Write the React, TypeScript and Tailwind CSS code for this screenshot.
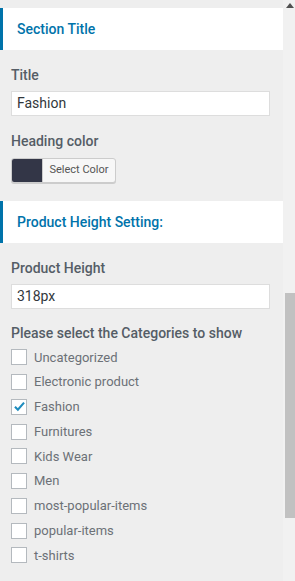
const categories = [
  { name: "Uncategorized", checked: false },
  { name: "Electronic product", checked: false },
  { name: "Fashion", checked: true },
  { name: "Furnitures", checked: false },
  { name: "Kids Wear", checked: false },
  { name: "Men", checked: false },
  { name: "most-popular-items", checked: false },
  { name: "popular-items", checked: false },
  { name: "t-shirts", checked: false },
];

function SectionHeader({ title }: { title: string }) {
  return (
    <div className="flex h-[42px] items-center border-l-[3px] border-[#0073aa] bg-white pl-[14px]">
      <h3 className="text-[14px] font-medium text-[#0073aa]">{title}</h3>
    </div>
  );
}

function Checkbox({ checked }: { checked: boolean }) {
  return (
    <span className="flex h-4 w-4 shrink-0 items-center justify-center border border-[#b4b9be] bg-white">
      {checked && (
        <svg width="13" height="13" viewBox="0 0 20 20" className="-mt-px">
          <path
            d="M3 10.5 L7.5 15 L17 4"
            fill="none"
            stroke="#1e8cbe"
            strokeWidth="3.2"
          />
        </svg>
      )}
    </span>
  );
}

export default function App() {
  return (
    <div
      className="flex h-[581px] w-[295px] overflow-hidden bg-[#eeeeee] text-[#555d66]"
      style={{ fontFamily: "Roboto, 'Liberation Sans', sans-serif" }}
    >
      <div className="w-[283px] shrink-0 pt-2">
        <SectionHeader title="Section Title" />

        <div className="px-[11px] pt-[16px]">
          <p className="text-[14px] font-medium leading-[18px]">Title</p>
          <div className="mt-[7px] flex h-[25px] w-[259px] items-center border border-[#dddddd] bg-white px-[5px] text-[14px] text-[#32373c]">
            Fashion
          </div>

          <p className="mt-[16px] text-[14px] font-medium leading-[18px]">
            Heading color
          </p>
          <div className="mt-[8px] flex h-[25px] w-[105px] overflow-hidden rounded-[3px] border border-[#cccccc] bg-[#f7f7f7] shadow-[0_1px_0_#cccccc]">
            <span className="w-[30px] bg-[#333647]" />
            <span className="flex flex-1 items-center justify-center border-l border-[#cccccc] text-[11px] text-[#555555]">
              Select Color
            </span>
          </div>
        </div>

        <div className="mt-[18px]">
          <SectionHeader title="Product Height Setting:" />
        </div>

        <div className="px-[11px] pt-[16px]">
          <p className="text-[14px] font-medium leading-[18px]">Product Height</p>
          <div className="mt-[7px] flex h-[25px] w-[259px] items-center border border-[#dddddd] bg-white px-[5px] text-[14px] text-[#32373c]">
            318px
          </div>

          <p className="mt-[15px] text-[14px] font-medium leading-[18px]">
            Please select the Categories to show
          </p>

          <ul className="mt-[3px]">
            {categories.map((c) => (
              <li key={c.name} className="flex h-[24.75px] items-center gap-[7px]">
                <Checkbox checked={c.checked} />
                <span className="text-[13px] text-[#6c7177]">{c.name}</span>
              </li>
            ))}
          </ul>
        </div>
      </div>

      <div className="relative w-[12px] bg-[#f1f1f1]">
        <svg width="8" height="5" viewBox="0 0 8 5" className="absolute left-[3px] top-[3px]">
          <path d="M0 5 L4 0 L8 5 Z" fill="#505050" />
        </svg>
        <div className="absolute left-[2px] right-0 top-[293px] h-[225px] bg-[#c1c1c1]" />
      </div>
    </div>
  );
}
